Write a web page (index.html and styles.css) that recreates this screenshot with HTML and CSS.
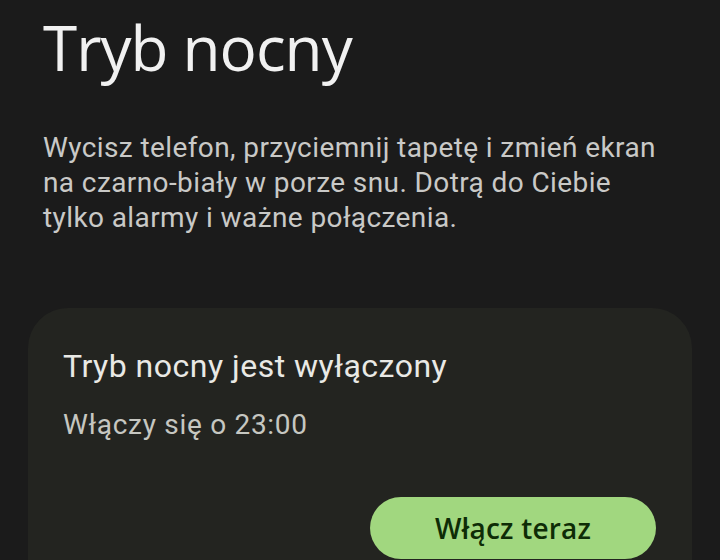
FILE: index.html
```html
<!DOCTYPE html>
<html lang="pl">
<head>
<meta charset="utf-8">
<link rel="stylesheet" href="styles.css">
</head>
<body>
<main class="page">
  <h1 class="title">Tryb nocny</h1>
  <p class="desc">Wycisz telefon, przyciemnij tapetę i zmień ekran na czarno-biały w porze snu. Dotrą do Ciebie tylko alarmy i ważne połączenia.</p>
  <section class="card">
    <h2 class="card-title">Tryb nocny jest wyłączony</h2>
    <p class="card-sub">Włączy się o 23:00</p>
    <div class="actions">
      <button class="btn">Włącz teraz</button>
    </div>
  </section>
</main>
</body>
</html>
```

FILE: styles.css
```css
html, body {
  margin: 0;
  padding: 0;
  background: #1b1b1b;
  height: 100%;
  overflow: hidden;
}
.page {
  display: flex;
  flex-direction: column;
  padding: 0 28px;
}
.title {
  margin: 7px 0 0 15px;
  font-family: "Open Sans", sans-serif;
  font-weight: 400;
  font-size: 62px;
  line-height: 80px;
  letter-spacing: -1px;
  color: #f1f1f1;
}
.desc {
  margin: 43px 0 0 15px;
  font-family: Roboto, sans-serif;
  font-size: 28px;
  line-height: 35px;
  letter-spacing: 0.4px;
  color: #c9c9c7;
  width: 620px;
}
.card {
  margin-top: 73px;
  background: #232420;
  border-radius: 40px;
  padding: 36px 36px 0 35px;
  height: 300px;
}
.card-title {
  margin: 0;
  font-family: Roboto, sans-serif;
  font-weight: 400;
  font-size: 32px;
  line-height: 44px;
  letter-spacing: 0.5px;
  color: #e9e9e5;
}
.card-sub {
  margin: 18px 0 0 0;
  font-family: Roboto, sans-serif;
  font-size: 28px;
  line-height: 38px;
  letter-spacing: 0.7px;
  color: #c6c7c1;
}
.actions {
  display: flex;
  justify-content: flex-end;
  margin-top: 53px;
}
.btn {
  width: 286px;
  height: 62px;
  border: none;
  border-radius: 31px;
  background: #a1d77f;
  color: #0e2c06;
  font-family: "Open Sans", sans-serif;
  font-weight: 600;
  font-size: 28px;
  letter-spacing: 0.2px;
  padding: 0;
}
```
